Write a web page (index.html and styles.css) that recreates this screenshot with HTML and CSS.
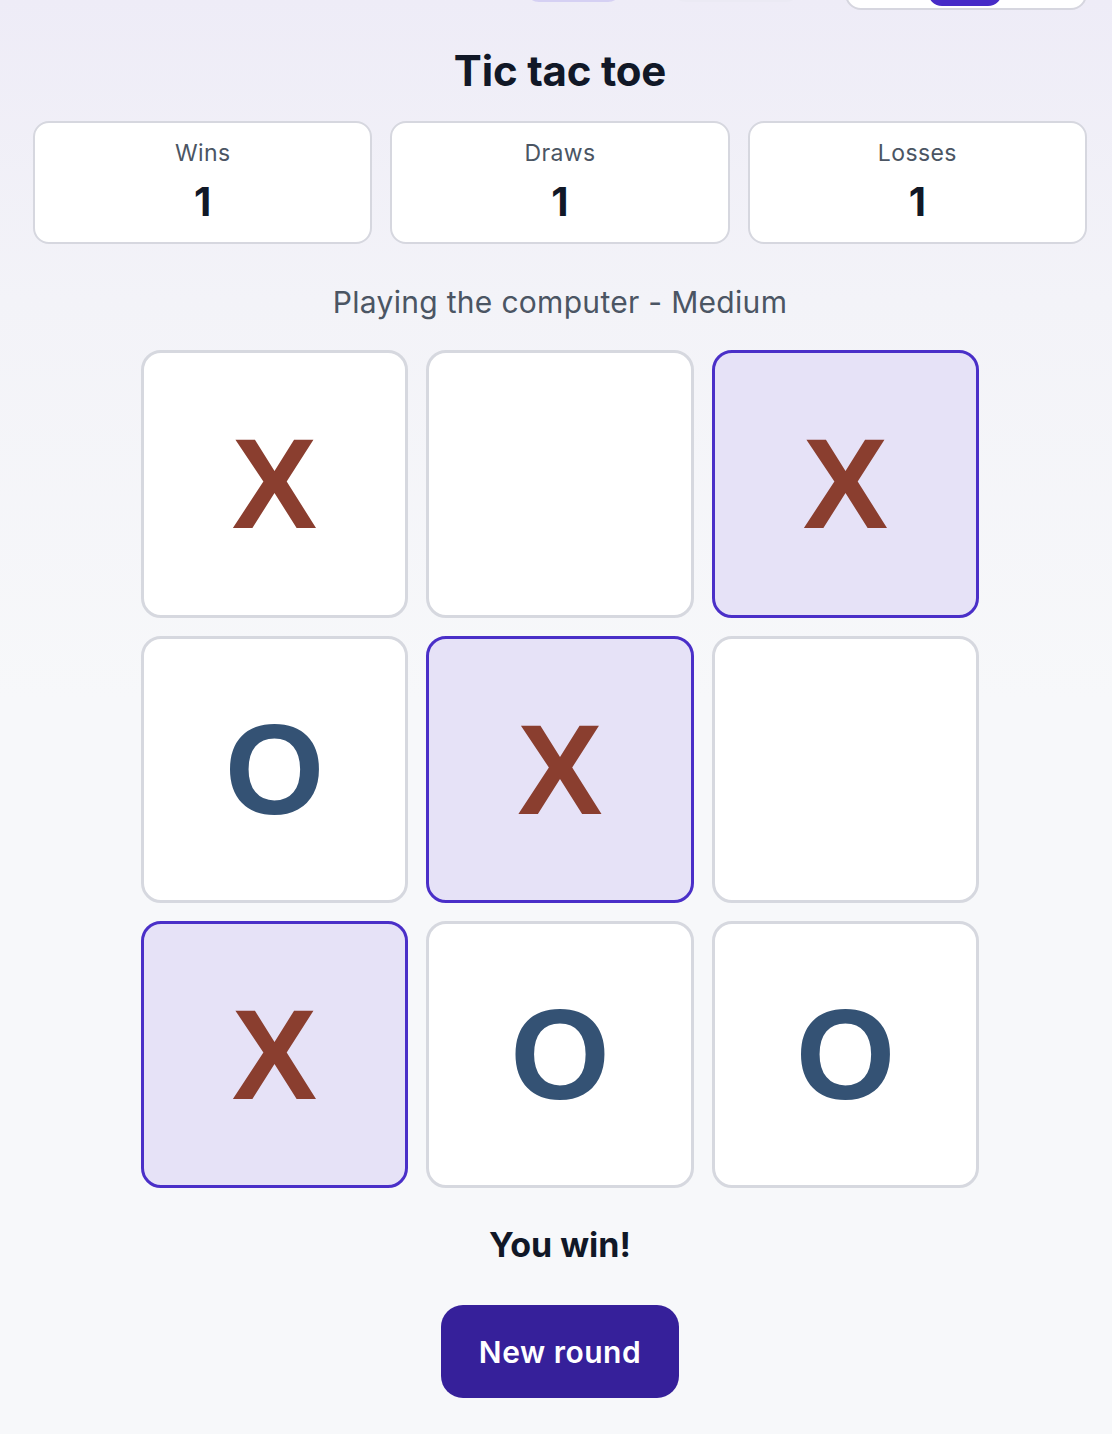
FILE: index.html
```html
<!DOCTYPE html>
<html lang="en">
<head>
<meta charset="utf-8">
<title>Tic tac toe</title>
<link rel="stylesheet" href="styles.css">
</head>
<body>
<div class="page">
  <header class="topbar">
    <nav class="tabs">
      <span class="tab tab-active"></span>
      <span class="tab tab-idle"></span>
    </nav>
    <div class="toggle">
      <span class="toggle-pill"></span>
    </div>
  </header>

  <h1 class="title">Tic tac toe</h1>

  <section class="stats">
    <div class="stat">
      <div class="stat-label">Wins</div>
      <div class="stat-value">1</div>
    </div>
    <div class="stat">
      <div class="stat-label">Draws</div>
      <div class="stat-value">1</div>
    </div>
    <div class="stat">
      <div class="stat-label">Losses</div>
      <div class="stat-value">1</div>
    </div>
  </section>

  <p class="mode">Playing the computer - Medium</p>

  <div class="board">
    <button class="cell"><span class="mark mark-x">X</span></button>
    <button class="cell"></button>
    <button class="cell cell-win"><span class="mark mark-x">X</span></button>
    <button class="cell"><span class="mark mark-o">O</span></button>
    <button class="cell cell-win"><span class="mark mark-x">X</span></button>
    <button class="cell"></button>
    <button class="cell cell-win"><span class="mark mark-x">X</span></button>
    <button class="cell"><span class="mark mark-o">O</span></button>
    <button class="cell"><span class="mark mark-o">O</span></button>
  </div>

  <p class="result">You win!</p>

  <button class="new-round">New round</button>
</div>
</body>
</html>
```

FILE: styles.css
```css
* { box-sizing: border-box; }

html, body {
  margin: 0;
  padding: 0;
}

body {
  min-height: 1434px;
  background: linear-gradient(180deg, #eeecf7 0px, #f3f3f8 300px, #f7f8fa 700px, #f7f8fa 100%);
  font-family: Inter, "Noto Sans", "Liberation Sans", sans-serif;
  color: #111827;
  overflow: hidden;
}

.page {
  display: flex;
  flex-direction: column;
  align-items: center;
  padding: 0 25px 0 33px;
}

/* cut-off top bar */
.topbar {
  align-self: stretch;
  display: flex;
  justify-content: flex-end;
  align-items: flex-end;
  gap: 45px;
  height: 50px;
  margin-top: -40px;
}

.tabs {
  display: flex;
  gap: 50px;
  margin-bottom: 8px;
}

.tab {
  display: block;
  height: 30px;
  border-radius: 14px;
}

.tab-active {
  width: 97px;
  background: #d5d0f3;
}

.tab-idle {
  width: 128px;
  background: #ebeaf4;
}

.toggle {
  display: flex;
  align-items: flex-end;
  width: 242px;
  height: 50px;
  padding: 0 0 2px 81px;
  background: #ffffff;
  border: 2px solid #d6d6df;
  border-radius: 16px;
}

.toggle-pill {
  display: block;
  width: 74px;
  height: 30px;
  background: #472bc7;
  border-radius: 14px;
}

.title {
  margin: 35px 0 0;
  font-size: 42px;
  line-height: 52px;
  font-weight: 700;
  letter-spacing: -0.2px;
  color: #111827;
}

.stats {
  align-self: stretch;
  display: grid;
  grid-template-columns: repeat(3, 1fr);
  gap: 18px;
  margin-top: 24px;
}

.stat {
  height: 123px;
  padding: 14px 0 0;
  background: #ffffff;
  border: 2px solid #d6d7df;
  border-radius: 16px;
  text-align: center;
}

.stat-label {
  font-size: 23px;
  line-height: 32px;
  color: #4b5563;
  letter-spacing: 0.4px;
}

.stat-value {
  margin-top: 9px;
  font-size: 40px;
  line-height: 48px;
  font-weight: 700;
  color: #111827;
}

.mode {
  margin: 40px 0 0;
  font-size: 30px;
  line-height: 36px;
  color: #4b5563;
  letter-spacing: 0.3px;
}

.board {
  display: grid;
  grid-template-columns: 267px 268px 267px;
  grid-template-rows: 268px 267px 267px;
  gap: 18px;
  margin-top: 30px;
}

.cell {
  display: flex;
  align-items: center;
  justify-content: center;
  padding: 0;
  margin: 0;
  background: #ffffff;
  border: 3px solid #d6d8df;
  border-radius: 20px;
  cursor: pointer;
}

.cell-win {
  background: #e6e2f7;
  border-color: #4a2fc8;
}

.mark {
  font-family: "Liberation Sans", Arial, sans-serif;
  font-weight: 700;
  font-size: 128px;
  line-height: 1;
}

.mark-x { color: #8a3e2f; }
.mark-o { color: #345274; }

.result {
  margin: 35px 0 0;
  font-size: 34px;
  line-height: 44px;
  font-weight: 700;
  color: #111827;
}

.new-round {
  margin-top: 38px;
  width: 238px;
  height: 93px;
  padding: 0;
  background: #36209a;
  color: #ffffff;
  border: none;
  border-radius: 22px;
  font-family: Inter, "Noto Sans", "Liberation Sans", sans-serif;
  font-size: 30px;
  font-weight: 600;
  letter-spacing: 0.5px;
  cursor: pointer;
}
```
